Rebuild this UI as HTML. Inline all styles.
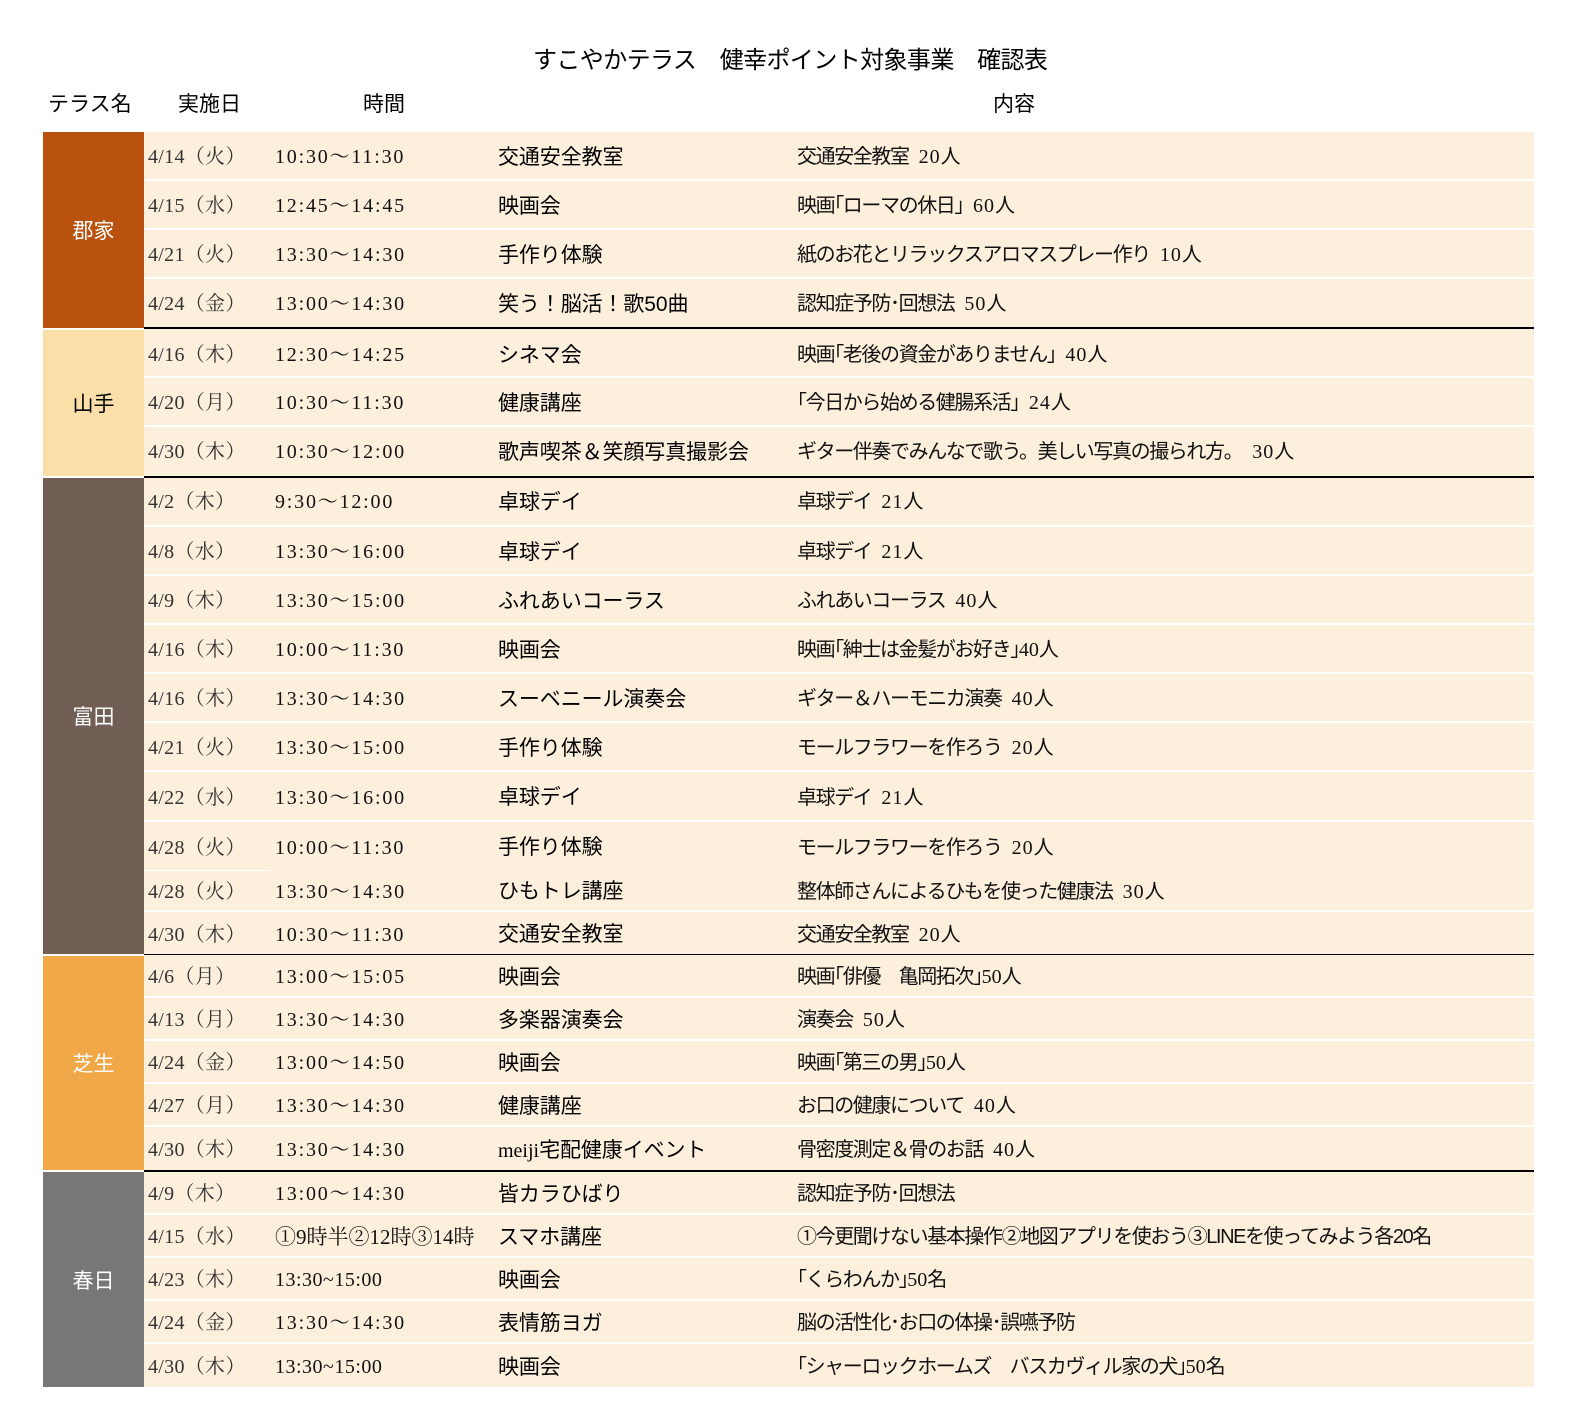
<!DOCTYPE html>
<html><head><meta charset="utf-8"><style>
body{margin:0;background:#fff;width:1569px;height:1417px;position:relative;overflow:hidden;font-family:"Liberation Sans","Noto Sans CJK JP",sans-serif;}
.a{position:absolute;white-space:nowrap}
.h{font-size:21px;color:#000;top:91px;line-height:28px}
.g{position:absolute;left:43px;width:101px;color:#fff;font-size:21px;display:flex;align-items:center;justify-content:center}
.r{position:absolute;left:144px;width:1390px;background:#fcf0dd;border-bottom:2px solid #fff;box-sizing:border-box;font-size:19px}
.r span{position:absolute;top:2px;white-space:nowrap}
.d{left:4px;font-family:"Liberation Serif","Noto Serif CJK SC",serif;color:#333;font-size:20px;letter-spacing:0.3px}
.t{left:131px;font-family:"Liberation Serif","Noto Serif CJK SC",serif;color:#111;letter-spacing:1.8px;font-size:20px}
.e{left:354px;color:#000;font-size:21px;letter-spacing:-0.1px}
.c{left:653px;color:#111;font-size:20px;letter-spacing:-1.4px}
.r span.n{position:static;font-family:"Liberation Serif",serif;font-size:20px;letter-spacing:1px;margin-left:10px}
.r span.m{position:static;font-family:"Liberation Serif",serif;font-size:20px;letter-spacing:0}
.bl{position:absolute;left:144px;width:1390px;background:#000}
</style></head><body>
<div class="a" style="left:533px;top:45px;font-size:24px;line-height:32px;letter-spacing:-0.6px">すこやかテラス　健幸ポイント対象事業　確認表</div>
<div class="a h" style="left:48px">テラス名</div>
<div class="a h" style="left:178px">実施日</div>
<div class="a h" style="left:363px">時間</div>
<div class="a h" style="left:993px">内容</div>

<div class="g" style="top:132px;height:196px;background:#b8520e">郡家</div>
<div class="g" style="top:330px;height:146px;background:#fbdfa8;color:#000">山手</div>
<div class="g" style="top:478px;height:476px;background:#715f56">富田</div>
<div class="g" style="top:956px;height:214px;background:#f0a848">芝生</div>
<div class="g" style="top:1172px;height:215px;background:#777">春日</div>

<div class="r" style="top:132px;height:49px;line-height:47px"><span class="d">4/14（火）</span><span class="t">10:30〜11:30</span><span class="e">交通安全教室</span><span class="c">交通安全教室<span class="n">20</span>人</span></div>
<div class="r" style="top:181px;height:49px;line-height:47px"><span class="d">4/15（水）</span><span class="t">12:45〜14:45</span><span class="e">映画会</span><span class="c">映画｢ローマの休日｣<span class="n">60</span>人</span></div>
<div class="r" style="top:230px;height:49px;line-height:47px"><span class="d">4/21（火）</span><span class="t">13:30〜14:30</span><span class="e">手作り体験</span><span class="c">紙のお花とリラックスアロマスプレー作り<span class="n">10</span>人</span></div>
<div class="r" style="top:279px;height:49px;line-height:47px;border-bottom:none"><span class="d">4/24（金）</span><span class="t">13:00〜14:30</span><span class="e">笑う！脳活！歌50曲</span><span class="c">認知症予防･回想法<span class="n">50</span>人</span></div>
<div class="bl" style="top:327px;height:2px"></div>

<div class="r" style="top:329px;height:49px;line-height:49px"><span class="d">4/16（木）</span><span class="t">12:30〜14:25</span><span class="e">シネマ会</span><span class="c">映画｢老後の資金がありません｣<span class="n">40</span>人</span></div>
<div class="r" style="top:378px;height:49px;line-height:47px"><span class="d">4/20（月）</span><span class="t">10:30〜11:30</span><span class="e">健康講座</span><span class="c">｢今日から始める健腸系活｣<span class="n">24</span>人</span></div>
<div class="r" style="top:427px;height:49px;line-height:47px;border-bottom:none"><span class="d">4/30（木）</span><span class="t">10:30〜12:00</span><span class="e">歌声喫茶＆笑顔写真撮影会</span><span class="c">ギター伴奏でみんなで歌う。美しい写真の撮られ方。<span class="n">30</span>人</span></div>
<div class="bl" style="top:476px;height:2px"></div>

<div class="r" style="top:478px;height:49px;line-height:45px"><span class="d">4/2（木）</span><span class="t">9:30〜12:00</span><span class="e">卓球デイ</span><span class="c">卓球デイ<span class="n">21</span>人</span></div>
<div class="r" style="top:527px;height:49px;line-height:47px"><span class="d">4/8（水）</span><span class="t">13:30〜16:00</span><span class="e">卓球デイ</span><span class="c">卓球デイ<span class="n">21</span>人</span></div>
<div class="r" style="top:576px;height:49px;line-height:47px"><span class="d">4/9（木）</span><span class="t">13:30〜15:00</span><span class="e">ふれあいコーラス</span><span class="c">ふれあいコーラス<span class="n">40</span>人</span></div>
<div class="r" style="top:625px;height:49px;line-height:47px"><span class="d">4/16（木）</span><span class="t">10:00〜11:30</span><span class="e">映画会</span><span class="c">映画｢紳士は金髪がお好き｣<span class="m">40</span>人</span></div>
<div class="r" style="top:674px;height:49px;line-height:47px"><span class="d">4/16（木）</span><span class="t">13:30〜14:30</span><span class="e">スーベニール演奏会</span><span class="c">ギター＆ハーモニカ演奏<span class="n">40</span>人</span></div>
<div class="r" style="top:723px;height:49px;line-height:47px"><span class="d">4/21（火）</span><span class="t">13:30〜15:00</span><span class="e">手作り体験</span><span class="c">モールフラワーを作ろう<span class="n">20</span>人</span></div>
<div class="r" style="top:772px;height:50px;line-height:48px"><span class="d">4/22（水）</span><span class="t">13:30〜16:00</span><span class="e">卓球デイ</span><span class="c">卓球デイ<span class="n">21</span>人</span></div>
<div class="r" style="top:822px;height:48px;line-height:48px;border-bottom:none"><span class="d">4/28（火）</span><span class="t">10:00〜11:30</span><span class="e">手作り体験</span><span class="c">モールフラワーを作ろう<span class="n">20</span>人</span></div>
<div class="r" style="top:870px;height:42px;line-height:40px"><span class="d">4/28（火）</span><span class="t">13:30〜14:30</span><span class="e">ひもトレ講座</span><span class="c">整体師さんによるひもを使った健康法<span class="n">30</span>人</span></div>
<div style="position:absolute;left:144px;top:870px;width:127px;height:1px;background:#fff"></div>
<div class="r" style="top:912px;height:42px;line-height:42px;border-bottom:none"><span class="d">4/30（木）</span><span class="t">10:30〜11:30</span><span class="e">交通安全教室</span><span class="c">交通安全教室<span class="n">20</span>人</span></div>
<div class="bl" style="top:954px;height:1px"></div>

<div class="r" style="top:955px;height:43px;line-height:41px"><span class="d">4/6（月）</span><span class="t">13:00〜15:05</span><span class="e">映画会</span><span class="c">映画｢俳優　亀岡拓次｣<span class="m">50</span>人</span></div>
<div class="r" style="top:998px;height:43px;line-height:41px"><span class="d">4/13（月）</span><span class="t">13:30〜14:30</span><span class="e">多楽器演奏会</span><span class="c">演奏会<span class="n">50</span>人</span></div>
<div class="r" style="top:1041px;height:43px;line-height:41px"><span class="d">4/24（金）</span><span class="t">13:00〜14:50</span><span class="e">映画会</span><span class="c">映画｢第三の男｣<span class="m">50</span>人</span></div>
<div class="r" style="top:1084px;height:43px;line-height:41px"><span class="d">4/27（月）</span><span class="t">13:30〜14:30</span><span class="e">健康講座</span><span class="c">お口の健康について<span class="n">40</span>人</span></div>
<div class="r" style="top:1127px;height:43px;line-height:43px;border-bottom:none"><span class="d">4/30（木）</span><span class="t">13:30〜14:30</span><span class="e"><span class="m">meiji</span>宅配健康イベント</span><span class="c">骨密度測定＆骨のお話<span class="n">40</span>人</span></div>
<div class="bl" style="top:1170px;height:2px"></div>

<div class="r" style="top:1172px;height:43px;line-height:41px"><span class="d">4/9（木）</span><span class="t">13:00〜14:30</span><span class="e">皆カラひばり</span><span class="c">認知症予防･回想法</span></div>
<div class="r" style="top:1215px;height:43px;line-height:41px"><span class="d">4/15（水）</span><span class="t" style="letter-spacing:0;font-size:21px">①9時半②12時③14時</span><span class="e">スマホ講座</span><span class="c">①今更聞けない基本操作②地図アプリを使おう③LINEを使ってみよう各20名</span></div>
<div class="r" style="top:1258px;height:43px;line-height:41px"><span class="d">4/23（木）</span><span class="t" style="letter-spacing:0.5px">13:30~15:00</span><span class="e">映画会</span><span class="c">｢くらわんか｣<span class="m">50</span>名</span></div>
<div class="r" style="top:1301px;height:43px;line-height:41px"><span class="d">4/24（金）</span><span class="t">13:30〜14:30</span><span class="e">表情筋ヨガ</span><span class="c">脳の活性化･お口の体操･誤嚥予防</span></div>
<div class="r" style="top:1344px;height:43px;line-height:43px;border-bottom:none"><span class="d">4/30（木）</span><span class="t" style="letter-spacing:0.5px">13:30~15:00</span><span class="e">映画会</span><span class="c">｢シャーロックホームズ　バスカヴィル家の犬｣<span class="m">50</span>名</span></div>
</body></html>
